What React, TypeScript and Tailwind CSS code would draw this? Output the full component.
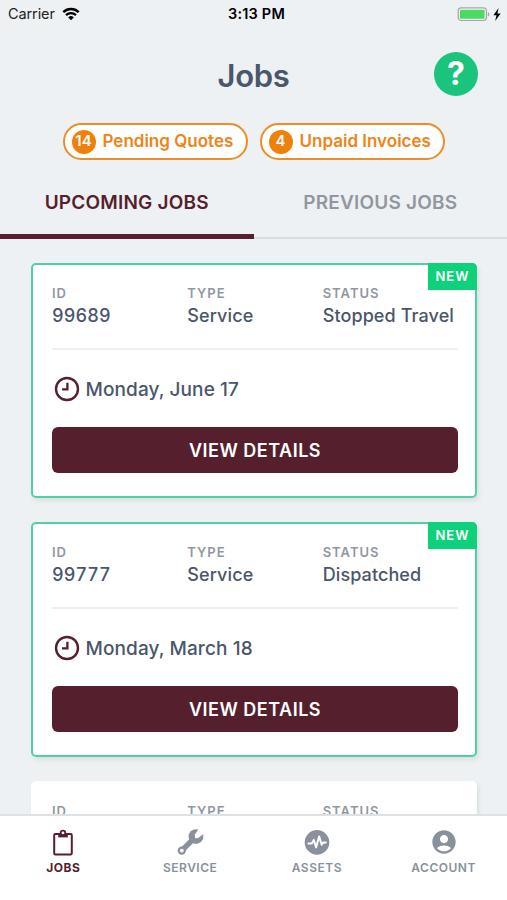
import { MdAccountCircle } from "react-icons/md";

interface Job {
  id: string;
  type: string;
  status: string;
  date: string;
  isNew: boolean;
}

const jobs: Job[] = [
  {
    id: "99689",
    type: "Service",
    status: "Stopped Travel",
    date: "Monday, June 17",
    isNew: true,
  },
  {
    id: "99777",
    type: "Service",
    status: "Dispatched",
    date: "Monday, March 18",
    isNew: true,
  },
];

const ClockIcon = () => (
  <svg width="26" height="26" viewBox="0 0 26 26" fill="none" stroke="#561f2d">
    <circle cx="13" cy="13" r="11" strokeWidth="2.4" />
    <path d="M13.4 6.8v6.6H8" strokeWidth="2.3" />
  </svg>
);

const ClipboardIcon = () => (
  <svg width="22" height="28" viewBox="0 0 22 28" fill="none" stroke="currentColor">
    <rect x="2.2" y="6" width="17.6" height="20.4" rx="1.2" strokeWidth="2" />
    <path d="M6.2 5.4h9.6v4H6.2z" fill="currentColor" stroke="none" />
    <circle cx="11" cy="5" r="2.3" fill="#fff" strokeWidth="1.8" />
    <path d="M7.5 7.6h7" strokeWidth="2.4" />
  </svg>
);

const WrenchIcon = () => (
  <svg width="28" height="28" viewBox="0 0 28 28" fill="none">
    <path d="M6 22.4 19 9.4" stroke="currentColor" strokeWidth="5.4" />
    <circle cx="5.8" cy="22.6" r="4.2" fill="currentColor" />
    <circle cx="20" cy="8.6" r="7.4" fill="currentColor" />
    <path d="m18.6 6.8 5-7 5.400 5-6.800 5.200-3 .2z" fill="#fff" />
    <circle cx="5.8" cy="22.6" r="1.9" fill="#fff" />
  </svg>
);

const PulseIcon = () => (
  <svg width="26" height="26" viewBox="0 0 26 26" fill="none">
    <circle cx="13" cy="13.4" r="12.3" fill="#89919d" />
    <path
      d="M4.4 14.4h3.4l2-3.4 2.3 7.4 3-11 2.6 8.4 1.5-2.2h2.6"
      stroke="#fff"
      strokeWidth="2"
      strokeLinecap="round"
      strokeLinejoin="round"
    />
  </svg>
);

const StatusBar = () => (
  <div className="relative h-7 flex items-center justify-between pl-2 pr-1.5 text-black">
    <div className="flex items-center gap-[7px]">
      <span className="text-[14.5px] tracking-[-0.1px] text-[#222]">
        Carrier
      </span>
      <svg width="18" height="14" viewBox="0 0 18 14" fill="none" stroke="#000">
        <path d="M1.3 5.1a11 11 0 0 1 15.4 0" strokeWidth="2.4" />
        <path d="M4 8.1a7.1 7.1 0 0 1 10 0" strokeWidth="2.2" />
        <path d="M6.2 10.4a4 4 0 0 1 5.6 0L9 13.3z" fill="#000" stroke="none" />
      </svg>
    </div>
    <span className="absolute left-1/2 -translate-x-1/2 ml-[3px] text-[14.5px] font-semibold whitespace-nowrap tracking-[0.2px]">
      3:13 PM
    </span>
    <div className="flex items-center gap-[3px]">
      <svg width="33" height="15" viewBox="0 0 33 15">
        <rect x="1.2" y="0.9" width="28.2" height="12.6" rx="3" fill="#f4f6f6" stroke="#a3a7a8" strokeWidth="1.2" />
        <rect x="3" y="2.7" width="24.6" height="9" rx="1" fill="#4cd964" />
        <path d="M30.8 5c2 .8 2 3.8 0 4.6z" fill="#a3a7a8" />
      </svg>
      <svg width="8" height="13" viewBox="0 0 8 13">
        <path d="M5.6 0 .4 7.2h3L2.2 13l5.4-7.4H4.4z" fill="#000" />
      </svg>
    </div>
  </div>
);

const Pill = ({ count, label }: { count: number; label: string }) => (
  <div className="w-[185px] h-[37px] flex items-center pl-[7px] bg-white border-2 border-[#ee8c26] rounded-full">
    <span className="w-6 h-6 shrink-0 flex items-center justify-center rounded-full bg-[#f0800c] text-white text-[15px] font-semibold">
      {count}
    </span>
    <span className="ml-[7px] text-[17px] font-semibold text-[#ee8418] whitespace-nowrap">
      {label}
    </span>
  </div>
);

const Field = ({ label, value }: { label: string; value?: string }) => (
  <div className="flex-1 whitespace-nowrap">
    <div className="text-[13px] leading-4 font-semibold tracking-[1px] text-[#92979f]">
      {label}
    </div>
    {value && (
      <div className="mt-1 text-[18px] leading-[22px] font-medium tracking-[0.1px] tabular-nums text-[#4a566b]">
        {value}
      </div>
    )}
  </div>
);

const JobCard = ({ job }: { job?: Job }) => (
  <div
    className={`relative h-[235px] shrink-0 pl-[19px] pr-[17px] pt-5 bg-white rounded-[5px] border-2 shadow-[2px_3px_4px_rgba(60,80,100,0.10)] ${
      job?.isNew ? "border-[#4fd1a1]" : "border-white"
    }`}
  >
    {job?.isNew && (
      <div className="absolute -top-0.5 -right-0.5 w-[49px] h-[27px] flex items-center justify-center rounded-tr-[5px] bg-[#0fd17c] text-white text-[13px] font-semibold tracking-[1px]">
        NEW
      </div>
    )}
    <div className="flex">
      <Field label="ID" value={job?.id} />
      <Field label="TYPE" value={job?.type} />
      <Field label="STATUS" value={job?.status} />
    </div>
    {job && (
      <>
        <div className="mt-[21px] h-0.5 bg-[#eeeff0]"></div>
        <div className="mt-[26px] ml-[1.5px] flex items-center gap-[6px]">
          <ClockIcon />
          <span className="pt-0.5 text-[19px] font-medium leading-6 tracking-[0.1px] text-[#4a566b]">
            {job.date}
          </span>
        </div>
        <button className="mt-[25px] w-full h-[46px] rounded-md bg-[#561f2d] text-white text-[18px] font-semibold tracking-[0.5px]">
          VIEW DETAILS
        </button>
      </>
    )}
  </div>
);

const navItems = [
  { label: "JOBS", icon: <ClipboardIcon />, active: true },
  { label: "SERVICE", icon: <WrenchIcon />, active: false },
  { label: "ASSETS", icon: <PulseIcon />, active: false },
  { label: "ACCOUNT", icon: <MdAccountCircle size={28} />, active: false },
];

const BottomNav = () => (
  <nav className="h-[86px] shrink-0 flex bg-white border-t-2 border-[#dfe2e4] z-10">
    {navItems.map((item) => (
      <div
        key={item.label}
        className={`flex-1 pt-3 flex flex-col items-center ${
          item.active ? "text-[#561f2d]" : "text-[#89919d]"
        }`}
      >
        <div className="h-7 flex items-center">{item.icon}</div>
        <span
          className={`mt-1 text-[12px] leading-4 tracking-[0.5px] ${
            item.active ? "font-bold" : "font-semibold"
          }`}
        >
          {item.label}
        </span>
      </div>
    ))}
  </nav>
);

const App = () => (
  <div className="w-full h-[900px] flex flex-col overflow-hidden bg-[#edf1f3] font-['Inter','Liberation_Sans',sans-serif]">
    <StatusBar />
    <header className="relative h-[95px] shrink-0 flex items-center justify-center">
      <h1 className="text-[31px] font-semibold text-[#4a566b] leading-none tracking-[-0.3px]">
        Jobs
      </h1>
      <button className="absolute right-[29px] top-6 w-11 h-11 rounded-full bg-[#1bc47d] flex items-center justify-center text-white text-[32px] leading-none font-bold">
        ?
      </button>
    </header>
    <div className="flex justify-center gap-3 shrink-0">
      <Pill count={14} label="Pending Quotes" />
      <Pill count={4} label="Unpaid Invoices" />
    </div>
    <div className="h-[79px] shrink-0 flex text-[19px] font-semibold tracking-[0.2px]">
      <div className="flex-1 flex items-center justify-center pt-[12px] border-b-[5px] border-[#561f2d] text-[#561f2d]">
        UPCOMING JOBS
      </div>
      <div className="flex-1 flex items-center justify-center pt-[9px] border-b-2 border-[#d9dddf] text-[#92979f]">
        PREVIOUS JOBS
      </div>
    </div>
    <main className="flex-1 min-h-0 overflow-hidden flex flex-col gap-6 pl-[31px] pr-[30px] pt-6">
      {jobs.map((job) => (
        <JobCard key={job.id} job={job} />
      ))}
      {/* next job, still loading */}
      <JobCard />
    </main>
    <BottomNav />
  </div>
);

export default App;
